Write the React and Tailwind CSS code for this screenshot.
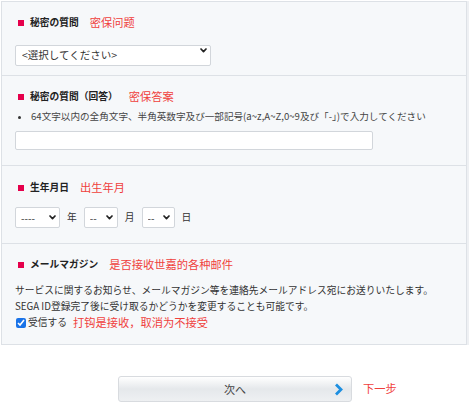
import React from "react";

const JP = { fontFamily: '"Noto Sans CJK JP", "Noto Sans", sans-serif' };
const SC = { fontFamily: '"Noto Sans CJK SC", "Noto Sans", sans-serif' };

function Chevron() {
  return (
    <svg width="7" height="5" viewBox="0 0 7 5" fill="none">
      <path d="M1 1l2.5 2.6L6 1" stroke="#222" strokeWidth="1.7" strokeLinecap="round" strokeLinejoin="round" />
    </svg>
  );
}

function Heading({ title, note }) {
  return (
    <div className="flex items-center h-[16px] pl-[3px]">
      <span className="w-[6px] h-[6px] bg-[#e5004b] shrink-0" />
      <span className="ml-[6px] text-[9.75px] font-bold text-[#222] leading-none" style={JP}>
        {title}
      </span>
      <span className="ml-[11px] text-[11.25px] text-[#f0403c] leading-none" style={SC}>
        {note}
      </span>
    </div>
  );
}

function FakeSelect({ width, text, chevronRight, textSize = "text-[10.5px]", pl = "pl-[6px]" }) {
  return (
    <div className={`relative h-[21px] ${width} shrink-0`}>
      <select
        className={`appearance-none w-full h-full bg-white border border-[#d2d6db] rounded-[2px] ${pl} ${textSize} text-[#333] leading-none outline-none`}
        style={JP}
        defaultValue="a"
      >
        <option value="a">{text}</option>
      </select>
      <span className={`absolute inset-y-0 ${chevronRight} flex items-center pointer-events-none`}>
        <Chevron />
      </span>
    </div>
  );
}

export default function App() {
  return (
    <div className="min-h-screen bg-white" style={JP}>
      <div className="ml-[1px] pt-[1px] w-[470px]">
        <div className="w-[466px] border border-[#dde1e6] bg-[#f6f8fa] shadow-[2px_0_0_#eef0f3]">
          {/* Row 1 */}
          <section className="pl-[13px] pr-[13px] pt-[13px] pb-[14px] border-b border-[#dde1e6]">
            <Heading title="秘密の質問" note="密保问题" />
            <div className="mt-[9px]">
              <FakeSelect width="w-[196px]" text="<選択してください>" chevronRight="right-[4px]" />
            </div>
          </section>

          {/* Row 2 */}
          <section className="pl-[13px] pr-[13px] pt-[13px] pb-[15px] border-b border-[#dde1e6]">
            <Heading title="秘密の質問（回答）" note="密保答案" />
            <div className="mt-[5px] h-[14px] flex items-center">
              <span className="ml-[3px] w-[3px] h-[3px] rounded-full bg-[#333] shrink-0" />
              <span className="ml-[10px] text-[9.6px] text-[#444] leading-none whitespace-nowrap" style={JP}>
                64文字以内の全角文字、半角英数字及び一部記号(a~z,A~Z,0~9及び「-」)で入力してください
              </span>
            </div>
            <input
              type="text"
              className="mt-[7px] block w-[358px] h-[19px] bg-white border border-[#d2d6db] rounded-[2px] outline-none"
            />
          </section>

          {/* Row 3 */}
          <section className="pl-[13px] pr-[13px] pt-[14px] pb-[15px] border-b border-[#dde1e6]">
            <Heading title="生年月日" note="出生年月" />
            <div className="mt-[11px] flex items-center gap-[7px] text-[9.75px] text-[#333]">
              <FakeSelect width="w-[45px]" text="----" chevronRight="right-[4px]" textSize="text-[10px]" pl="pl-[5px]" />
              <span className="leading-none">年</span>
              <FakeSelect width="w-[34px]" text="--" chevronRight="right-[5px]" textSize="text-[10px]" pl="pl-[5px]" />
              <span className="leading-none">月</span>
              <FakeSelect width="w-[33px]" text="--" chevronRight="right-[5px]" textSize="text-[10px]" pl="pl-[5px]" />
              <span className="leading-none">日</span>
            </div>
          </section>

          {/* Row 4 */}
          <section className="pl-[13px] pr-[13px] pt-[13px] pb-[13px]">
            <Heading title="メールマガジン" note="是否接收世嘉的各种邮件" />
            <p className="mt-[9px] text-[9.75px] leading-[16px] text-[#333] whitespace-nowrap" style={JP}>
              サービスに関するお知らせ、メールマガジン等を連絡先メールアドレス宛にお送りいたします。
              <br />
              SEGA ID登録完了後に受け取るかどうかを変更することも可能です。
            </p>
            <label className="mt-[1px] h-[16px] flex items-center">
              <input
                type="checkbox"
                defaultChecked
                className="ml-[1px] m-0 w-[10px] h-[10px] accent-[#1a73e8]"
              />
              <span className="ml-[2px] text-[9.75px] text-[#333] leading-none" style={JP}>
                受信する
              </span>
              <span className="ml-[6px] text-[11.25px] text-[#f0403c] leading-none" style={SC}>
                打钩是接收，取消为不接受
              </span>
            </label>
          </section>
        </div>

        {/* Button row */}
        <div className="mt-[31px] flex items-center pl-[117px]">
          <button
            type="button"
            className="relative w-[234px] h-[26px] rounded-[3px] border border-[#d8dbdf] bg-linear-to-b from-[#ffffff] via-[#e5e8eb] to-[#eef0f2] flex items-center justify-center"
          >
            <span className="text-[11px] text-[#444] leading-none" style={JP}>
              次へ
            </span>
            <svg
              className="absolute right-[8px] top-[6px]"
              width="9"
              height="13"
              viewBox="0 0 9 13"
              fill="none"
            >
              <path d="M2 1.5l5 5-5 5" stroke="#1d8fe1" strokeWidth="2.8" strokeLinejoin="miter" />
            </svg>
          </button>
          <span className="ml-[11px] text-[11.25px] text-[#f0403c] leading-none" style={SC}>
            下一步
          </span>
        </div>
      </div>
    </div>
  );
}
